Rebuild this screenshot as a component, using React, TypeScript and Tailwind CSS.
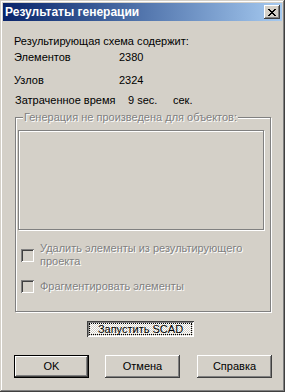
import React from 'react';

const font = { fontFamily: '"Liberation Sans", Arial, sans-serif' };

function CloseButton() {
  return (
    <div className="w-[16px] h-[14px] bg-[#d4d0c8] flex items-center justify-center shadow-[inset_-1px_-1px_#404040,inset_1px_1px_#ffffff,inset_-2px_-2px_#808080]">
      <svg width="8" height="7" viewBox="0 0 8 7" shapeRendering="crispEdges" className="mt-[1px]">
        <path
          fill="#000"
          d="M0 0h2v1H0z M6 0h2v1H6z M1 1h2v1H1z M5 1h2v1H5z M2 2h4v1H2z M3 3h2v1H3z M2 4h4v1H2z M1 5h2v1H1z M5 5h2v1H5z M0 6h2v1H0z M6 6h2v1H6z"
        />
      </svg>
    </div>
  );
}

function Checkbox() {
  return (
    <div className="w-[13px] h-[13px] shrink-0 bg-[#d4d0c8] shadow-[inset_1px_1px_#808080,inset_-1px_-1px_#ffffff,inset_2px_2px_#404040,inset_-2px_-2px_#d4d0c8]" />
  );
}

function Button({ label, isDefault }: { label: string; isDefault?: boolean }) {
  return (
    <button
      className={
        'w-[75px] h-[23px] bg-[#d4d0c8] text-[11px] font-normal text-black leading-[13px] flex items-center justify-center ' +
        (isDefault
          ? 'border border-black shadow-[inset_-1px_-1px_#404040,inset_1px_1px_#ffffff,inset_-2px_-2px_#808080]'
          : 'shadow-[inset_-1px_-1px_#404040,inset_1px_1px_#ffffff,inset_-2px_-2px_#808080]')
      }
    >
      {label}
    </button>
  );
}

export default function App() {
  const disabledText = 'text-[#808080] [text-shadow:1px_1px_0_#ffffff]';

  return (
    <div
      style={font}
      className="w-[285px] h-[392px] bg-[#d4d0c8] p-[3px] flex flex-col shadow-[inset_-1px_-1px_#404040,inset_1px_1px_#d4d0c8,inset_-2px_-2px_#808080,inset_2px_2px_#ffffff] text-[11px] text-black"
    >
      <div className="h-[18px] bg-gradient-to-r from-[#0a246a] to-[#a6caf0] flex items-center pl-[2px] pr-[2px]">
        <span className="text-white font-bold text-[12px] leading-[14px] flex-1">Результаты генерации</span>
        <CloseButton />
      </div>

      <div className="flex flex-col pl-[11px]">
        <div className="mt-[14px] h-[13px] leading-[13px]">Результирующая схема содержит:</div>

        <div className="mt-[3px] h-[13px] leading-[13px] flex">
          <span className="w-[105px]">Элементов</span>
          <span>2380</span>
        </div>

        <div className="mt-[10px] h-[13px] leading-[13px] flex">
          <span className="w-[105px]">Узлов</span>
          <span>2324</span>
        </div>

        <div className="mt-[7px] h-[13px] leading-[13px] flex pl-[1px]">
          <span className="w-[113px]">Затраченное время</span>
          <span className="w-[45px]">9 sec.</span>
          <span>сек.</span>
        </div>

        <div className="relative mt-[10px] ml-[1px] w-[256px] h-[195px] border border-[#808080] shadow-[1px_1px_0_#ffffff,inset_1px_1px_0_#ffffff] flex flex-col">
          <span className={'absolute -top-[7px] left-[7px] px-[1px] bg-[#d4d0c8] leading-[13px] ' + disabledText}>
            Генерация не произведена для объектов:
          </span>

          <div className="mt-[12px] ml-[2px] w-[246px] h-[100px] border border-[#808080] shadow-[1px_1px_0_#ffffff,inset_1px_1px_0_#ffffff]" />

          <div className="mt-[12px] ml-[5px] flex items-center">
            <Checkbox />
            <div className={'ml-[6px] leading-[13px] ' + disabledText}>
              <div>Удалить элементы из результирующего</div>
              <div>проекта</div>
            </div>
          </div>

          <div className="mt-[12px] ml-[5px] flex items-center">
            <Checkbox />
            <div className={'ml-[6px] leading-[13px] ' + disabledText}>Фрагментировать элементы</div>
          </div>
        </div>

        <div className="mt-[9px] ml-[73px] w-[107px] h-[16px] p-[2px] shadow-[inset_1px_1px_#404040,inset_-1px_-1px_#ffffff,inset_2px_2px_#808080] bg-[repeating-conic-gradient(#ffffff_0_25%,#d4d0c8_0_50%)] bg-[length:2px_2px]">
          <div className="h-full border border-dotted border-black flex items-center justify-center leading-[11px] pt-[1px]">
            Запустить SCAD
          </div>
        </div>

        <div className="mt-[18px] flex">
          <Button label="OK" isDefault />
          <div className="ml-[16px]">
            <Button label="Отмена" />
          </div>
          <div className="ml-[17px]">
            <Button label="Справка" />
          </div>
        </div>
      </div>
    </div>
  );
}
